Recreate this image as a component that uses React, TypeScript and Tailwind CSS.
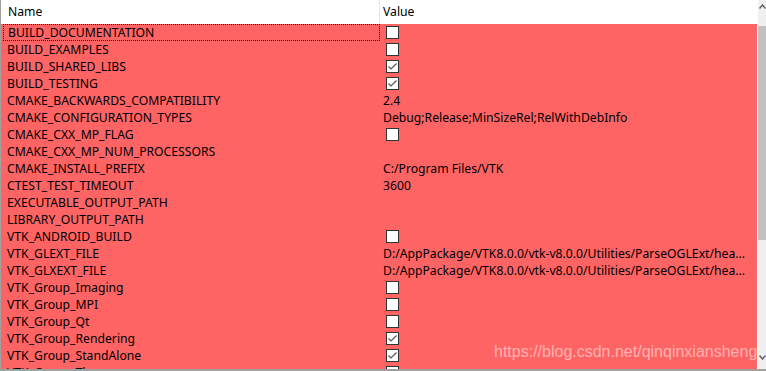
import React from "react";

type Row = { name: string; value?: string; check?: boolean };

const rows: Row[] = [
  { name: "BUILD_DOCUMENTATION", check: false },
  { name: "BUILD_EXAMPLES", check: false },
  { name: "BUILD_SHARED_LIBS", check: true },
  { name: "BUILD_TESTING", check: true },
  { name: "CMAKE_BACKWARDS_COMPATIBILITY", value: "2.4" },
  { name: "CMAKE_CONFIGURATION_TYPES", value: "Debug;Release;MinSizeRel;RelWithDebInfo" },
  { name: "CMAKE_CXX_MP_FLAG", check: false },
  { name: "CMAKE_CXX_MP_NUM_PROCESSORS", value: "" },
  { name: "CMAKE_INSTALL_PREFIX", value: "C:/Program Files/VTK" },
  { name: "CTEST_TEST_TIMEOUT", value: "3600" },
  { name: "EXECUTABLE_OUTPUT_PATH", value: "" },
  { name: "LIBRARY_OUTPUT_PATH", value: "" },
  { name: "VTK_ANDROID_BUILD", check: false },
  { name: "VTK_GLEXT_FILE", value: "D:/AppPackage/VTK8.0.0/vtk-v8.0.0/Utilities/ParseOGLExt/hea..." },
  { name: "VTK_GLXEXT_FILE", value: "D:/AppPackage/VTK8.0.0/vtk-v8.0.0/Utilities/ParseOGLExt/hea..." },
  { name: "VTK_Group_Imaging", check: false },
  { name: "VTK_Group_MPI", check: false },
  { name: "VTK_Group_Qt", check: false },
  { name: "VTK_Group_Rendering", check: true },
  { name: "VTK_Group_StandAlone", check: true },
  { name: "VTK_Group_Tk", check: false },
];

function CheckBox({ checked }: { checked: boolean }) {
  return (
    <div className="ml-[3px] w-[13px] h-[13px] border border-[#333333] bg-white flex items-center justify-center">
      {checked && (
        <svg width="11" height="11" viewBox="0 0 11 11">
          <path d="M1.5 5.5 L4 8 L9.5 2.5" fill="none" stroke="#555555" strokeWidth="1.2" />
        </svg>
      )}
    </div>
  );
}

export default function App() {
  return (
    <div
      className="relative w-[766px] h-[371px] bg-white overflow-hidden flex flex-col border-l border-[#a0a0a0] border-b-2 border-b-[#a0a0a0] text-[12.2px] text-black"
      style={{ fontFamily: '"Noto Sans", "Noto Sans CJK SC", sans-serif' }}
    >
      <div className="flex flex-1 min-h-0">
        <div className="flex-1 flex flex-col min-w-0">
          <div className="h-[24px] flex items-center shrink-0 bg-white">
            <div className="w-[379px] h-full flex items-center pl-[7px] border-r border-[#e5e5e5]">Name</div>
            <div className="flex-1 pl-[3px]">Value</div>
          </div>
          <div className="flex flex-col bg-[#ff6464] flex-1">
            {rows.map((r, i) => (
              <div key={i} className="h-[17px] shrink-0 flex items-center leading-[17px]">
                <div
                  className={
                    "w-[377px] ml-[2px] h-[17px] flex items-center pl-[4px] whitespace-nowrap " +
                    (i === 0 ? "border border-dotted border-black pl-[3px]" : "")
                  }
                >
                  {r.name}
                </div>
                <div className="flex-1 pl-[3px] whitespace-nowrap flex items-center">
                  {r.check !== undefined ? <CheckBox checked={r.check} /> : r.value}
                </div>
              </div>
            ))}
          </div>
        </div>
        <div className="w-[1px] bg-white" />
        <div className="w-[8px] bg-[#f0f0f0] flex flex-col">
          <div className="h-[26px] flex items-start pt-[4px] pl-[1px]">
            <svg width="7" height="5" viewBox="0 0 7 5">
              <path d="M0.5 4.5 L3.5 1 L6.5 4.5" fill="none" stroke="#606060" strokeWidth="1.5" />
            </svg>
          </div>
          <div className="h-[214px] bg-[#c1c1c1]" />
          <div className="flex-1" />
          <div className="h-[14px] flex items-start pl-[1px]">
            <svg width="7" height="5" viewBox="0 0 7 5">
              <path d="M0.5 0.5 L3.5 4 L6.5 0.5" fill="none" stroke="#606060" strokeWidth="1.5" />
            </svg>
          </div>
        </div>
      </div>
      <div
        className="absolute left-[493px] top-[340px] text-[16px] text-white/50 whitespace-nowrap"
        style={{ fontFamily: '"Liberation Sans", Arial, sans-serif' }}
      >
        https://blog.csdn.net/qinqinxiansheng
      </div>
    </div>
  );
}
